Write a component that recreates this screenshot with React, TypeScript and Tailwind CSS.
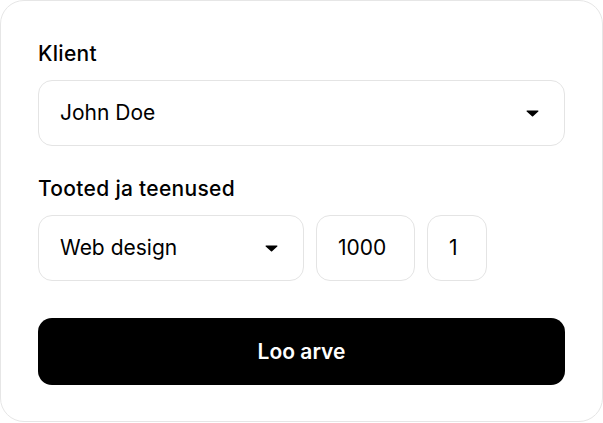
function Caret() {
  return (
    <svg width="13" height="7" viewBox="0 0 13 7" className="shrink-0">
      <path d="M1.2 0.5h10.6c0.6 0 0.9 0.7 0.5 1.1L7.1 6.3c-0.3 0.3-0.8 0.3-1.1 0L0.7 1.6C0.3 1.2 0.6 0.5 1.2 0.5z" fill="#000" />
    </svg>
  )
}

function Select({ value, className }: { value: string; className?: string }) {
  return (
    <div
      className={`h-[66px] flex items-center justify-between pl-[21px] pr-[25px] border border-[#e4e4e4] rounded-[14px] bg-white ${className ?? ''}`}
    >
      <span className="text-[21px] leading-7 text-black">{value}</span>
      <Caret />
    </div>
  )
}

function Field({ value, className }: { value: string; className?: string }) {
  return (
    <div
      className={`h-[66px] flex items-center pl-[21px] border border-[#e4e4e4] rounded-[14px] bg-white ${className ?? ''}`}
    >
      <span className="text-[21px] leading-7 text-black">{value}</span>
    </div>
  )
}

export default function App() {
  return (
    <div className="w-[603px] h-[423px] bg-white" style={{ fontFamily: 'Inter, "Liberation Sans", sans-serif' }}>
      <div className="border border-[#e6e6e6] rounded-[24px] px-[37px] pt-[39px] pb-[36px] bg-white">
        <div className="text-[21px] leading-7 font-medium tracking-[0.3px] text-black">Klient</div>
        <Select value="John Doe" className="mt-3" />

        <div className="mt-[29px] text-[21px] leading-7 font-medium tracking-[0.3px] text-black">Tooted ja teenused</div>
        <div className="mt-3 flex gap-3">
          <Select value="Web design" className="w-[266px]" />
          <Field value="1000" className="w-[99px]" />
          <Field value="1" className="w-[60px]" />
        </div>

        <button className="mt-[37px] w-full h-[67px] rounded-[14px] bg-black text-white text-[21px] font-semibold">
          Loo arve
        </button>
      </div>
    </div>
  )
}
